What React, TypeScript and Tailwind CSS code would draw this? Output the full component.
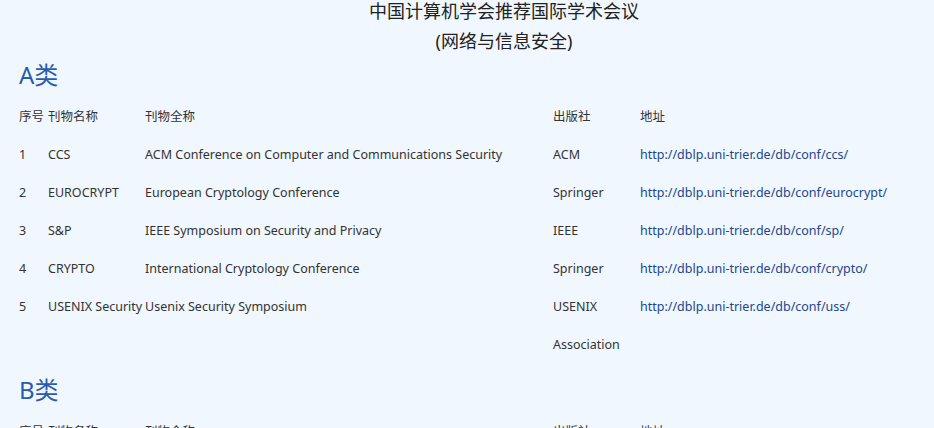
const rowsA = [
  { no: '1', abbr: 'CCS', name: 'ACM Conference on Computer and Communications Security', pub: 'ACM', url: 'http://dblp.uni-trier.de/db/conf/ccs/' },
  { no: '2', abbr: 'EUROCRYPT', name: 'European Cryptology Conference', pub: 'Springer', url: 'http://dblp.uni-trier.de/db/conf/eurocrypt/' },
  { no: '3', abbr: 'S&P', name: 'IEEE Symposium on Security and Privacy', pub: 'IEEE', url: 'http://dblp.uni-trier.de/db/conf/sp/' },
  { no: '4', abbr: 'CRYPTO', name: 'International Cryptology Conference', pub: 'Springer', url: 'http://dblp.uni-trier.de/db/conf/crypto/' },
  { no: '5', abbr: 'USENIX Security', name: 'Usenix Security Symposium', pub: 'USENIX Association', url: 'http://dblp.uni-trier.de/db/conf/uss/' },
];

function HeadRow() {
  return (
    <tr>
      <td className="align-top">序号</td>
      <td className="align-top">刊物名称</td>
      <td className="align-top">刊物全称</td>
      <td className="align-top">出版社</td>
      <td className="align-top">地址</td>
    </tr>
  );
}

function Cols() {
  return (
    <colgroup>
      <col className="w-[29px]" />
      <col className="w-[97px]" />
      <col className="w-[408px]" />
      <col className="w-[87px]" />
      <col />
    </colgroup>
  );
}

function ConfTable({ rows }: { rows: typeof rowsA }) {
  return (
    <table className="table-fixed w-[890px] border-collapse text-[12.5px] leading-[38px] text-[#333]">
      <Cols />
      <tbody>
        <HeadRow />
        {rows.map((r) => (
          <tr key={r.no}>
            <td className="align-top">{r.no}</td>
            <td className="align-top whitespace-nowrap">{r.abbr}</td>
            <td className="align-top">{r.name}</td>
            <td className="align-top">{r.pub}</td>
            <td className="align-top">
              <a href={r.url} className="text-[#23468c]">{r.url}</a>
            </td>
          </tr>
        ))}
      </tbody>
    </table>
  );
}

export default function App() {
  return (
    <div
      className="min-h-screen bg-[#f0f7fe] overflow-hidden"
      style={{ fontFamily: '"Noto Sans", "Noto Sans CJK SC", sans-serif' }}
    >
      <div className="h-[428px] overflow-hidden">
        <div className="-mt-[4px] pl-[74px] text-center text-[18px] leading-[30px] text-[#222]">
          <div>中国计算机学会推荐国际学术会议</div>
          <div>(网络与信息安全)</div>
        </div>

        <div className="pl-[19px]">
          <h2 className="mt-[3px] text-[24px] leading-[32px] text-[#2a5caa]">A类</h2>
          <div className="mt-[7px]">
            <ConfTable rows={rowsA} />
          </div>

          <h2 className="mt-[10px] text-[24px] leading-[32px] text-[#2a5caa]">B类</h2>
          <div className="mt-[7px]">
            <table className="table-fixed w-[890px] border-collapse text-[12.5px] leading-[38px] text-[#333]">
              <Cols />
              <tbody>
                <HeadRow />
              </tbody>
            </table>
          </div>
        </div>
      </div>
    </div>
  );
}
